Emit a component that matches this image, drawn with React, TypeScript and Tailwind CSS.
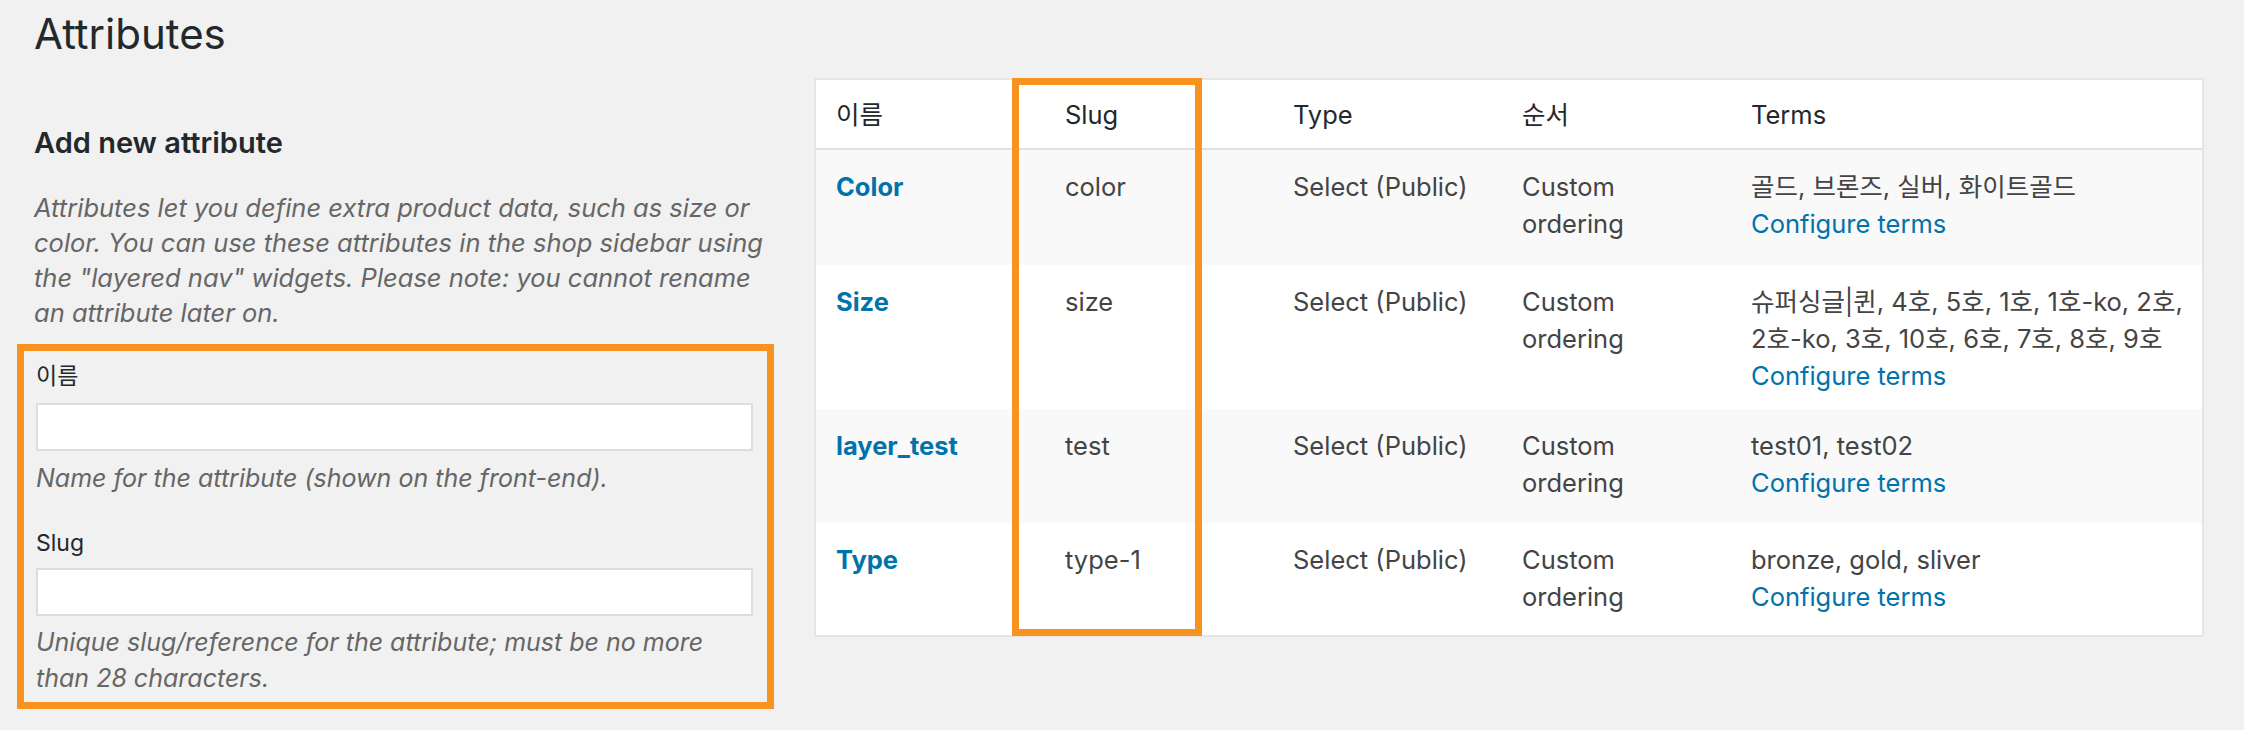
const rows = [
  { name: 'Color', slug: 'color', terms: '골드, 브론즈, 실버, 화이트골드', h: 'h-[115px]', bg: 'bg-[#f9f9f9]' },
  { name: 'Size', slug: 'size', terms: '슈퍼싱글|퀸, 4호, 5호, 1호, 1호-ko, 2호, 2호-ko, 3호, 10호, 6호, 7호, 8호, 9호', h: 'h-[144px]', bg: 'bg-white' },
  { name: 'layer_test', slug: 'test', terms: 'test01, test02', h: 'h-[114px]', bg: 'bg-[#f9f9f9]' },
  { name: 'Type', slug: 'type-1', terms: 'bronze, gold, sliver', h: 'h-[112px]', bg: 'bg-white' },
]

const cols = 'grid grid-cols-[227px_228px_229px_229px_1fr]'

const App = () => {
  return (
    <div
      className="w-[2244px] h-[730px] bg-[#f1f1f1] text-[#444] overflow-hidden"
      style={{ fontFamily: 'Inter, "Noto Sans CJK KR", sans-serif' }}
    >
      <h1 className="pl-[34px] pt-[6px] text-[42px] leading-[56px] text-[#23282d]">Attributes</h1>
      <div className="flex pl-[17px] pt-[62px]">
        <div className="w-[757px]">
          <h2 className="pl-[17px] text-[29px] font-semibold text-[#23282d] leading-[38px]">Add new attribute</h2>
          <p className="pl-[17px] pr-[0px] mt-[28px] text-[25.5px] leading-[35px] italic text-[#666]">
            Attributes let you define extra product data, such as size or color. You can use these attributes in the shop sidebar using the "layered nav" widgets. Please note: you cannot rename an attribute later on.
          </p>
          <div className="mt-[14px] border-[7px] border-[#f7931e] pl-[12px] pr-[14px] pt-[10px] pb-[4px] h-[365px]">
            <div className="text-[23px] leading-[30px] text-[#23282d]">이름</div>
            <div className="mt-[12px] h-[48px] bg-white border-2 border-[#ddd]"></div>
            <div className="mt-[10px] text-[25px] leading-[35px] italic text-[#666]">Name for the attribute (shown on the front-end).</div>
            <div className="mt-[32px] text-[23px] leading-[30px] text-[#23282d]">Slug</div>
            <div className="mt-[10px] h-[48px] bg-white border-2 border-[#ddd]"></div>
            <div className="mt-[8px] text-[25px] leading-[36px] italic text-[#666]">Unique slug/reference for the attribute; must be no more than 28 characters.</div>
          </div>
        </div>
        <div className="relative ml-[40px] mt-[-46px] w-[1390px] self-start">
          <div className="bg-white border-2 border-[#e5e5e5] text-[25.5px] leading-[37px]">
            <div className={`${cols} h-[70px] items-center border-b-2 border-[#e1e1e1] text-[#23282d]`}>
              <div className="px-[20px]">이름</div>
              <div className="px-[22px]">Slug</div>
              <div className="px-[22px]">Type</div>
              <div className="px-[22px]">순서</div>
              <div className="px-[22px]">Terms</div>
            </div>
            {rows.map((r) => (
              <div key={r.name} className={`${cols} ${r.h} ${r.bg} pt-[18px]`}>
                <div className="px-[20px] font-bold text-[#0073aa]">{r.name}</div>
                <div className="px-[22px]">{r.slug}</div>
                <div className="px-[22px] whitespace-nowrap">Select (Public)</div>
                <div className="px-[22px]">Custom<br />ordering</div>
                <div className="pl-[22px] pr-[10px]">
                  <div>{r.terms}</div>
                  <div className="text-[#0073aa]">Configure terms</div>
                </div>
              </div>
            ))}
          </div>
          <div className="absolute left-[198px] top-0 w-[190px] h-[558px] border-[7px] border-[#f7931e]"></div>
        </div>
      </div>
    </div>
  )
}

export default App
